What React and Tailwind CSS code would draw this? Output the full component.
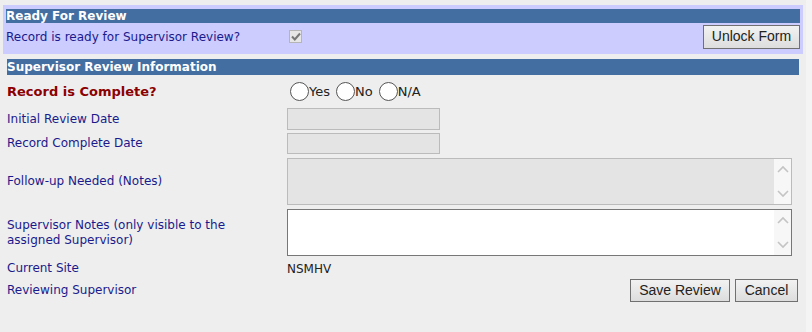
import React from 'react';

const labelFont = { fontFamily: '"DejaVu Sans", Verdana, sans-serif' };
const btnFont = { fontFamily: '"Liberation Sans", Arial, sans-serif' };

const Chevrons = () => (
  <div className="w-[17px] h-full flex flex-col items-center justify-between py-[6px] bg-[#f7f7f7]">
    <svg width="12" height="8" viewBox="0 0 12 8">
      <path d="M1 7 L6 2 L11 7" fill="none" stroke="#c4c4c4" strokeWidth="1.6" />
    </svg>
    <svg width="12" height="8" viewBox="0 0 12 8">
      <path d="M1 1 L6 6 L11 1" fill="none" stroke="#c4c4c4" strokeWidth="1.6" />
    </svg>
  </div>
);

const Radio = ({ label }) => (
  <span className="flex items-center">
    <span className="w-[19px] h-[19px] rounded-full border-[1.5px] border-[#555] bg-white"></span>
    <span className="text-[13px] text-[#222] mr-[6px]">{label}</span>
  </span>
);

const Row = ({ label, children, className = '' }) => (
  <div className={`flex items-center ${className}`}>
    <div className="w-[280px] text-[12px] text-[#1a1a8c] leading-[15px] pr-[20px]">{label}</div>
    <div className="flex-1">{children}</div>
  </div>
);

export default function App() {
  return (
    <div className="w-[812px] h-[332px] bg-[#f4f4f4] overflow-hidden" style={labelFont}>
      <div className="w-[806px] h-[332px] bg-[#eeeeee] pt-[5px] pl-[3px]">
        {/* Ready For Review */}
        <div className="w-[800px] h-[49px] bg-[#ccccff] pt-[4px] px-[3px]">
          <div className="h-[14px] bg-[#436ea1] text-white font-bold text-[12px] leading-[14px]">
            Ready For Review
          </div>
          <div className="flex items-center h-[27px]">
            <div className="w-[283px] text-[12px] text-[#1a1a8c]">Record is ready for Supervisor Review?</div>
            <span className="w-[13px] h-[13px] border border-[#b5b5b5] bg-[#e6e6e6] flex items-center justify-center">
              <svg width="10" height="9" viewBox="0 0 10 9">
                <path d="M1 4.5 L3.8 7.5 L9 1.5" fill="none" stroke="#777" strokeWidth="2" />
              </svg>
            </span>
            <div className="flex-1"></div>
            <button
              className="w-[97px] h-[24px] border border-[#707070] bg-gradient-to-b from-[#f2f2f2] to-[#dddddd] text-[14px] text-[#222]"
              style={btnFont}
            >
              Unlock Form
            </button>
          </div>
        </div>

        {/* Supervisor Review Information */}
        <div className="ml-[4px] mt-[5px] w-[792px] h-[16px] bg-[#436ea1] text-white font-bold text-[12px] leading-[16px]">
          Supervisor Review Information
        </div>

        <div className="pl-[4px] pr-[11px]">
          <Row label={<span className="text-[#8b0000] font-bold text-[13px]">Record is Complete?</span>} className="h-[32px] pt-[1px]">
            <div className="flex items-center pl-[3px]">
              <Radio label="Yes" />
              <Radio label="No" />
              <Radio label="N/A" />
            </div>
          </Row>

          <Row label="Initial Review Date" className="h-[24px]">
            <div className="w-[153px] h-[22px] border border-[#bbbbbb] bg-[#e4e4e4]"></div>
          </Row>
          <Row label="Record Complete Date" className="h-[21px] mt-[2px]">
            <div className="w-[153px] h-[21px] border border-[#bbbbbb] bg-[#e4e4e4]"></div>
          </Row>
          <Row label="Follow-up Needed (Notes)" className="h-[47px] mt-[4px]">
            <div className="w-[505px] h-[47px] border border-[#bbbbbb] bg-[#e4e4e4] flex justify-end">
              <Chevrons />
            </div>
          </Row>
          <Row label="Supervisor Notes (only visible to the assigned Supervisor)" className="h-[47px] mt-[4px]">
            <div className="w-[505px] h-[47px] border border-[#777777] bg-white flex justify-end">
              <Chevrons />
            </div>
          </Row>

          <Row label="Current Site" className="h-[18px] mt-[3px]">
            <span className="text-[12px] text-[#222]">NSMHV</span>
          </Row>

          <div className="flex items-center h-[26px] mr-[-3px]">
            <div className="w-[280px] text-[12px] text-[#1a1a8c]">Reviewing Supervisor</div>
            <div className="flex-1"></div>
            <button
              className="w-[100px] h-[23px] border border-[#707070] bg-gradient-to-b from-[#f2f2f2] to-[#dddddd] text-[14px] text-[#222]"
              style={btnFont}
            >
              Save Review
            </button>
            <button
              className="ml-[5px] w-[63px] h-[23px] border border-[#707070] bg-gradient-to-b from-[#f2f2f2] to-[#dddddd] text-[14px] text-[#222]"
              style={btnFont}
            >
              Cancel
            </button>
          </div>
        </div>
      </div>
    </div>
  );
}
